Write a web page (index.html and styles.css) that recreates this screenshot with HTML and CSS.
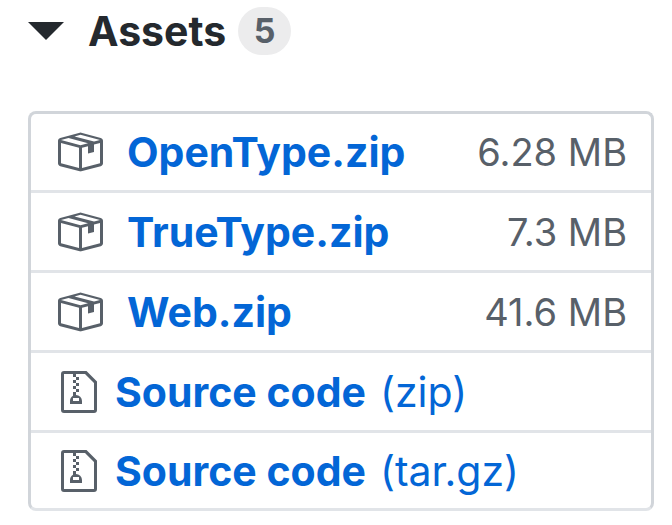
FILE: index.html
```html
<!DOCTYPE html>
<html lang="en">
<head>
<meta charset="utf-8">
<title>Assets</title>
<link rel="stylesheet" href="styles.css">
</head>
<body>
<svg class="defs" aria-hidden="true">
  <symbol id="package" viewBox="0 0 16 16"><path fill-rule="evenodd" d="M1 4.27v7.47c0 .45.3.84.75.97l6.5 1.73c.16.05.34.05.5 0l6.5-1.73c.45-.13.75-.52.75-.97V4.27c0-.45-.3-.84-.75-.97l-6.5-1.74a1.4 1.4 0 0 0-.5 0L1.75 3.3c-.45.13-.75.52-.75.97zm7 9.09l-6-1.59V5l6 1.61v6.75zM2 4l2.5-.67L11 5.06l-2.5.67L2 4zm13 7.77l-6 1.59V6.61l2-.55V8.5l2-.53V5.53L15 5v6.77zm-2-7.24L6.5 2.8l2-.53L15 4l-2 .53z"/></symbol>
  <symbol id="zip" viewBox="0 0 12 16"><path fill-rule="evenodd" d="M8.5 1H1a1 1 0 0 0-1 1v12a1 1 0 0 0 1 1h10a1 1 0 0 0 1-1V4.5L8.5 1zM11 14H1V2h3v1h1V2h3l3 3v9zM5 4V3h1v1H5zM4 4h1v1H4V4zm1 2V5h1v1H5zM4 6h1v1H4V6zm1 2V7h1v1H5zM4 9.28A2 2 0 0 0 3 11v1h4v-1a2 2 0 0 0-2-2V8H4v1.28zM6 10v1H4v-1h2z"/></symbol>
</svg>
<details class="assets" open>
  <summary class="heading"><span class="caret"></span><span class="title">Assets</span><span class="count">5</span></summary>
  <ul class="list">
    <li class="row"><svg class="package"><use href="#package"/></svg><a class="name" href="#opentype">OpenType.zip</a><small class="size">6.28 MB</small></li>
    <li class="row"><svg class="package"><use href="#package"/></svg><a class="name" href="#truetype">TrueType.zip</a><small class="size">7.3 MB</small></li>
    <li class="row"><svg class="package"><use href="#package"/></svg><a class="name" href="#web">Web.zip</a><small class="size">41.6 MB</small></li>
    <li class="row"><a class="source" href="#source-zip"><svg class="zip"><use href="#zip"/></svg><strong>Source code</strong><span>(zip)</span></a></li>
    <li class="row"><a class="source" href="#source-targz"><svg class="zip"><use href="#zip"/></svg><strong>Source code</strong><span>(tar.gz)</span></a></li>
  </ul>
</details>
</body>
</html>
```

FILE: styles.css
```css
* { box-sizing: border-box; }
body {
  margin: 0;
  background: #fff;
  color: #24292e;
  font-family: Inter, sans-serif;
  font-size: 41px;
  line-height: 48px;
}
.defs { position: absolute; width: 0; height: 0; }
.assets { padding: 7px 18px 14px 28px; }
.heading {
  display: flex;
  align-items: center;
  height: 48px;
  list-style: none;
  font-weight: 650;
}
.caret {
  border: 18px solid transparent;
  border-top-color: #24292e;
  border-bottom: 0;
}
.title { margin-left: 24px; }
.count {
  min-width: 53px;
  margin-left: 12px;
  border-radius: 24px;
  background: #ececed;
  color: #586069;
  font-size: 34px;
  text-align: center;
}
.list {
  margin: 56px 0 0;
  padding: 0;
  border: 3px solid #d1d5da;
  border-bottom-color: #e1e4e8;
  border-radius: 8px;
  list-style: none;
}
.row {
  display: flex;
  align-items: center;
  height: 80px;
  padding: 0 24px 0 24px;
}
.row:first-child { height: 76px; }
.row:last-child { height: 78px; }
.row + .row { border-top: 3px solid #e1e4e8; }
.package { width: 48px; height: 48px; margin-right: 24px; fill: #586069; }
.zip { width: 36px; height: 48px; margin: 0 18px 0 6px; fill: #586069; }
.name, .source { color: #0366d6; text-decoration: none; }
.name, .source strong { font-weight: 700; }
.size { margin-left: auto; color: #586069; font-size: 38px; }
.source { display: flex; align-items: center; }
.source span { margin-left: 14px; }
```
